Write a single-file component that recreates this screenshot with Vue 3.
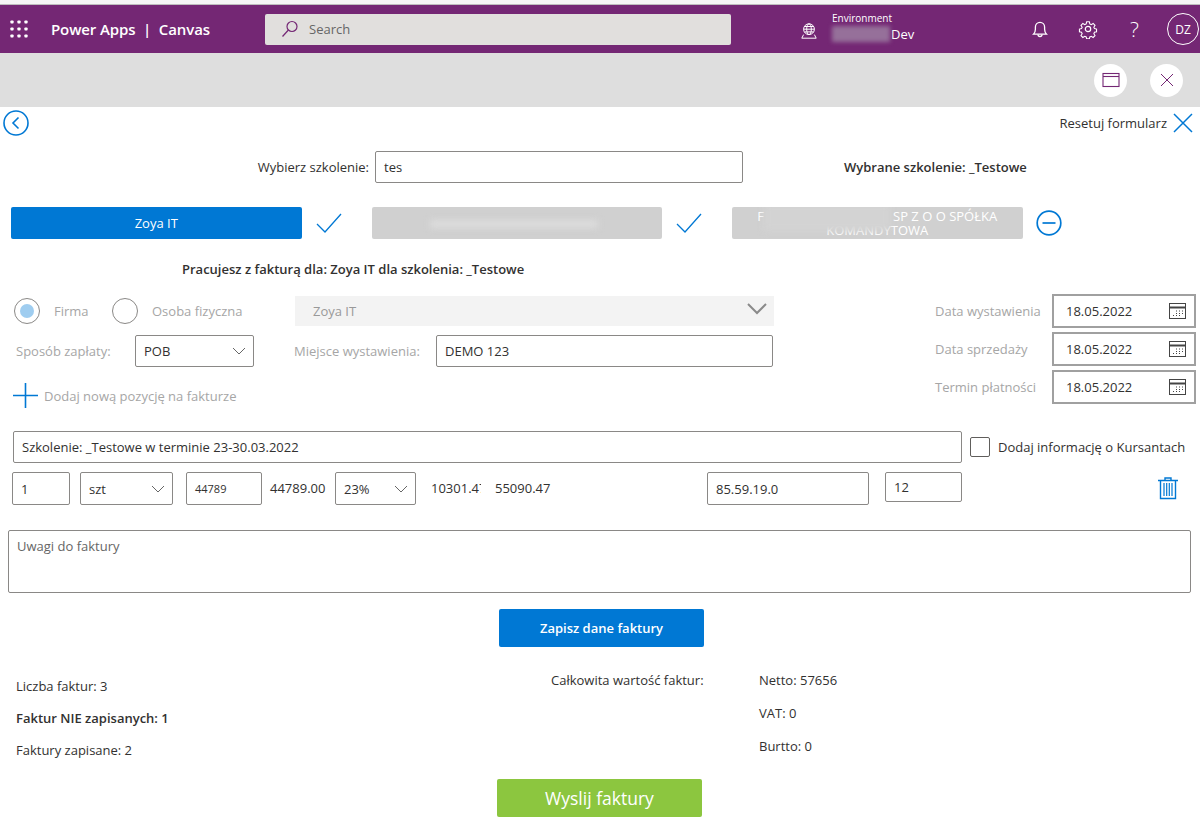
<template>
  <div class="page">
    <div class="top-strip"></div>

    <header class="app-bar">
      <svg class="waffle" width="18" height="18" viewBox="0 0 18 18" fill="#fff">
        <template v-for="y in [2, 9, 16]" :key="y">
          <rect v-for="x in [2, 9, 16]" :key="x" :x="x - 1.6" :y="y - 1.6" width="3.2" height="3.2" rx="0.8" />
        </template>
      </svg>
      <div class="app-name">Power Apps&nbsp; | &nbsp;Canvas</div>
      <div class="search">
        <svg width="18" height="18" viewBox="0 0 18 18" fill="none" stroke="#742774" stroke-width="1.2">
          <circle cx="11" cy="6.5" r="5" />
          <path d="M7.4 10 1.5 16.5" />
        </svg>
        <span>Search</span>
      </div>
      <svg class="env-icon" width="18" height="18" viewBox="0 0 20 20" fill="none" stroke="#fff" stroke-width="1.1">
        <circle cx="10" cy="8" r="6" />
        <ellipse cx="10" cy="8" rx="2.6" ry="6" />
        <path d="M4 8h12M5 5h10M5 11h10M4 14l-2 4h16l-2-4" />
      </svg>
      <div class="env">
        <div class="env-label">Environment</div>
        <div class="env-name"><span class="env-blur"></span>Dev</div>
      </div>
      <svg class="bell" width="20" height="20" viewBox="0 0 20 20" fill="none" stroke="#fff" stroke-width="1.3">
        <path d="M3.5 15.2h13c-1.3-1.4-1.9-2.6-1.9-5V8a4.6 4.6 0 0 0-9.2 0v2.2c0 2.4-.6 3.6-1.9 5Z" />
        <path d="M8 15.5a2 2 0 0 0 4 0" />
      </svg>
      <svg class="gear" width="20" height="20" viewBox="0 0 20 20" fill="none" stroke="#fff" stroke-width="1.2">
        <circle cx="10" cy="10" r="2.7" />
        <path d="M8.5 2h3l.5 2.4 1.6.7 2.1-1.3 2.1 2.1-1.3 2.1.7 1.6 2.3.5v3l-2.3.5-.7 1.6 1.3 2.1-2.1 2.1-2.1-1.3-1.6.7-.5 2.2h-3l-.5-2.2-1.6-.7-2.1 1.3-2.1-2.1 1.3-2.1-.7-1.6-2.3-.5v-3l2.3-.5.7-1.6-1.3-2.1 2.1-2.1 2.1 1.3 1.6-.7Z" transform="translate(1 1) scale(.9)" />
      </svg>
      <div class="help">?</div>
      <div class="avatar">DZ</div>
    </header>

    <div class="sub-bar">
      <button class="round-btn">
        <svg width="18" height="16" viewBox="0 0 18 16" fill="none" stroke="#742774" stroke-width="1.1">
          <rect x="1" y="1.5" width="16" height="13" />
          <path d="M1 4.5h16" />
        </svg>
      </button>
      <button class="round-btn">
        <svg width="14" height="14" viewBox="0 0 14 14" fill="none" stroke="#742774" stroke-width="1">
          <path d="m1 1 12 12M13 1 1 13" />
        </svg>
      </button>
    </div>

    <main class="form">
      <div class="nav-row">
        <svg width="26" height="26" viewBox="0 0 26 26" fill="none" stroke="#0078d4" stroke-width="1.6">
          <circle cx="13" cy="13" r="12" />
          <path d="M15.5 7.5 10 13l5.5 5.5" />
        </svg>
        <div class="reset">
          <span>Resetuj formularz</span>
          <svg width="20" height="20" viewBox="0 0 20 20" fill="none" stroke="#0078d4" stroke-width="1.5">
            <path d="m1 1 18 18M19 1 1 19" />
          </svg>
        </div>
      </div>

      <div class="course-row">
        <label class="course-label">Wybierz szkolenie:</label>
        <div class="field course-input">tes</div>
        <div class="course-picked">Wybrane szkolenie: _Testowe</div>
      </div>

      <div class="company-row">
        <template v-for="c in companies" :key="c.id">
          <div class="company" :class="{ active: c.active }">
            <span v-if="c.active">{{ c.name }}</span>
            <span v-else-if="c.long" class="company-long">F<span class="spacer"></span>SP Z O O SPÓŁKA<br>KOMANDYTOWA</span>
            <span v-if="c.blur" class="company-blur" :class="c.blur"></span>
          </div>
          <svg v-if="c.mark === 'check'" class="mark" width="26" height="20" viewBox="0 0 26 20" fill="none" stroke="#0078d4" stroke-width="1.3">
            <path d="m1 11 8 8L25 1" />
          </svg>
          <svg v-else class="mark minus" width="26" height="26" viewBox="0 0 26 26" fill="none" stroke="#0078d4" stroke-width="1.7">
            <circle cx="13" cy="13" r="11.8" />
            <path d="M6.5 13h13" />
          </svg>
        </template>
      </div>

      <div class="working">Pracujesz z fakturą dla: Zoya IT dla szkolenia: _Testowe</div>

      <div class="details">
        <div class="details-left">
          <div class="type-row">
            <span class="radio on"></span>
            <span class="muted firma">Firma</span>
            <span class="radio"></span>
            <span class="muted osoba">Osoba fizyczna</span>
            <div class="company-select">
              <span>Zoya IT</span>
              <svg width="20" height="12" viewBox="0 0 20 12" fill="none" stroke="#8a8a8a" stroke-width="2">
                <path d="m1 1 9 9 9-9" />
              </svg>
            </div>
          </div>
          <div class="pay-row">
            <span class="muted pay-label">Sposób zapłaty:</span>
            <div class="field select pay-select">
              <span>POB</span>
              <svg width="14" height="8" viewBox="0 0 14 8" fill="none" stroke="#666" stroke-width="1">
                <path d="m1 1 6 6 6-6" />
              </svg>
            </div>
            <span class="muted place-label">Miejsce wystawienia:</span>
            <div class="field place-input">DEMO 123</div>
          </div>
          <div class="add-row">
            <svg width="25" height="25" viewBox="0 0 25 25" fill="none" stroke="#0078d4" stroke-width="1.6">
              <path d="M12.5 0v25M0 12.5h25" />
            </svg>
            <span class="muted">Dodaj nową pozycję na fakturze</span>
          </div>
        </div>
        <div class="dates">
          <div v-for="d in dates" :key="d" class="date-row">
            <span class="muted date-label">{{ d }}</span>
            <div class="date-field">
              <span>18.05.2022</span>
              <svg width="17" height="16" viewBox="0 0 17 16" fill="none" stroke="#444" stroke-width="1">
                <rect x="0.5" y="0.5" width="16" height="15" />
                <path d="M.5 4.5h16" stroke-width="2" />
                <path d="M7 8h1M10 8h1M13 8h1M7 10.5h1M10 10.5h1M13 10.5h1M4 12.5h1M7 12.5h1M10 12.5h1" />
              </svg>
            </div>
          </div>
        </div>
      </div>

      <div class="desc-row">
        <div class="field desc-input">Szkolenie: _Testowe w terminie 23-30.03.2022</div>
        <span class="checkbox"></span>
        <span class="check-label">Dodaj informację o Kursantach</span>
      </div>

      <div class="line-row">
        <div class="field qty">1</div>
        <div class="field select unit">
          <span>szt</span>
          <svg width="14" height="8" viewBox="0 0 14 8" fill="none" stroke="#666" stroke-width="1">
            <path d="m1 1 6 6 6-6" />
          </svg>
        </div>
        <div class="field price">44789</div>
        <span class="net">44789.00</span>
        <div class="field select vat">
          <span>23%</span>
          <svg width="14" height="8" viewBox="0 0 14 8" fill="none" stroke="#666" stroke-width="1">
            <path d="m1 1 6 6 6-6" />
          </svg>
        </div>
        <span class="vat-sum">10301.47</span>
        <span class="gross">55090.47</span>
        <div class="field pkwiu">85.59.19.0</div>
        <div class="field code">12</div>
        <svg class="trash" width="20" height="23" viewBox="0 0 20 23" fill="none" stroke="#0078d4" stroke-width="1.4">
          <path d="M0 3.5h20M7 3V1h6v2" />
          <path d="M2.5 4v17.5h15V4" />
          <path d="M6 6v13M8.7 6v13M11.3 6v13M14 6v13" stroke-width="1.2" />
        </svg>
      </div>

      <div class="notes">Uwagi do faktury</div>

      <div class="center-row save-row">
        <button class="btn-save">Zapisz dane faktury</button>
      </div>

      <div class="summary">
        <div class="summary-left">
          <div>Liczba faktur: 3</div>
          <div class="strong">Faktur NIE zapisanych: 1</div>
          <div>Faktury zapisane: 2</div>
        </div>
        <div class="summary-title">Całkowita wartość faktur:</div>
        <div class="summary-right">
          <div>Netto: 57656</div>
          <div>VAT: 0</div>
          <div>Burtto: 0</div>
        </div>
      </div>

      <div class="center-row send-row">
        <button class="btn-send">Wyslij faktury</button>
      </div>
    </main>
  </div>
</template>

<script setup>
const companies = [
  { id: 1, name: 'Zoya IT', active: true, mark: 'check' },
  { id: 2, blur: 'blur-mid', mark: 'check' },
  { id: 3, long: true, blur: 'blur-left', mark: 'minus' }
]

const dates = ['Data wystawienia', 'Data sprzedaży', 'Termin płatności']
</script>

<style>
body {
  background: #fff;
}
</style>

<style scoped>
.page {
  width: 1200px;
  height: 823px;
  overflow: hidden;
  background: #fff;
  color: #323130;
  font-family: "Open Sans", "Noto Sans", sans-serif;
  font-size: 13px;
}

.top-strip {
  height: 5px;
  background: #f5f5f5;
  border-bottom: 1px solid #bdbdbd;
  box-sizing: border-box;
}

.app-bar {
  height: 48px;
  background: #742774;
  color: #fff;
  display: flex;
  align-items: center;
}

.waffle {
  margin-left: 10px;
}

.app-name {
  margin-left: 23px;
  width: 214px;
  font-size: 15px;
  font-weight: 600;
  letter-spacing: -0.1px;
}

.search {
  width: 466px;
  height: 31px;
  background: #e1dfdd;
  border-radius: 2px;
  display: flex;
  align-items: center;
  gap: 10px;
  padding-left: 16px;
  box-sizing: border-box;
  color: #666;
}

.env-icon {
  margin: 3px 0 0 69px;
}

.env {
  margin-left: 14px;
  width: 198px;
}

.env-label {
  font-size: 10px;
  line-height: 14px;
  margin-top: -5px;
}

.env-name {
  display: flex;
  align-items: center;
  font-size: 13px;
  line-height: 18px;
}

.env-blur {
  width: 58px;
  height: 16px;
  margin-right: 1px;
  background: #96709a;
  filter: blur(2px);
}

.gear {
  margin-left: 28px;
}

.help {
  margin-left: 32px;
  width: 16px;
  font-size: 21px;
  font-weight: 300;
}

.avatar {
  box-sizing: border-box;
  margin-left: 21px;
  width: 32px;
  height: 32px;
  border: 1px solid #fff;
  border-radius: 50%;
  display: flex;
  align-items: center;
  justify-content: center;
  font-size: 12px;
}

.sub-bar {
  height: 54px;
  background: #dedede;
  display: flex;
  justify-content: flex-end;
  align-items: center;
  gap: 23px;
  padding-right: 17px;
}

.round-btn {
  width: 33px;
  height: 33px;
  border: none;
  padding: 0;
  border-radius: 50%;
  background: #fff;
  display: flex;
  align-items: center;
  justify-content: center;
}

.form {
  display: flex;
  flex-direction: column;
}

.muted {
  color: #a6a6a6;
}

.field {
  box-sizing: border-box;
  background: #fff;
  border: 1px solid #8a8886;
  border-radius: 2px;
  display: flex;
  align-items: center;
  padding-left: 8px;
}

.select {
  justify-content: space-between;
  padding-right: 7px;
}

.nav-row {
  height: 44px;
  padding: 3px 7px 0 3px;
  box-sizing: border-box;
  display: flex;
  justify-content: space-between;
  align-items: flex-start;
}

.reset {
  display: flex;
  align-items: center;
  gap: 6px;
  margin-top: 3px;
}

.course-row {
  height: 32px;
  display: flex;
  align-items: center;
}

.course-label {
  width: 369px;
  text-align: right;
}

.course-input {
  margin-left: 6px;
  width: 368px;
  height: 32px;
}

.course-picked {
  margin-left: 101px;
  font-weight: 600;
}

.company-row {
  margin-top: 24px;
  padding-left: 11px;
  height: 32px;
  display: flex;
  align-items: center;
}

.company {
  position: relative;
  overflow: hidden;
  width: 290.5px;
  height: 32px;
  background: #d0d0d0;
  border-radius: 2px;
  color: #fff;
  display: flex;
  align-items: center;
  justify-content: center;
  text-align: center;
  line-height: 14px;
}

.company.active {
  background: #0078d4;
}

.company-long {
  display: block;
  width: 290px;
}

.spacer {
  display: inline-block;
  width: 129px;
}

.company-blur {
  position: absolute;
  filter: blur(3px);
}

.blur-mid {
  left: 58px;
  top: 13px;
  width: 168px;
  height: 8px;
  background: #dcdcdc;
}

.blur-left {
  left: 32px;
  top: -4px;
  width: 126px;
  height: 28px;
  background: #d3d3d3;
}

.mark {
  margin: 0 30px 0 14px;
}

.mark.minus {
  margin: 0 0 0 13px;
}

.working {
  margin-top: 21px;
  padding-left: 182px;
  height: 18px;
  line-height: 18px;
  font-weight: 600;
}

.details {
  margin-top: 16px;
  height: 116px;
  display: flex;
  justify-content: space-between;
  padding-right: 4px;
}

.details-left {
  display: flex;
  flex-direction: column;
}

.type-row {
  height: 30px;
  margin-top: 2px;
  padding-left: 14px;
  display: flex;
  align-items: center;
}

.radio {
  box-sizing: border-box;
  width: 26px;
  height: 26px;
  border: 1.5px solid #8a8886;
  border-radius: 50%;
  display: flex;
  align-items: center;
  justify-content: center;
}

.radio.on::after {
  content: "";
  width: 14px;
  height: 14px;
  border-radius: 50%;
  background: #9fcdf0;
}

.firma {
  margin-left: 14px;
  width: 58px;
}

.osoba {
  margin-left: 14px;
  width: 143px;
}

.company-select {
  width: 479px;
  height: 30px;
  background: #f3f3f3;
  color: #999;
  box-sizing: border-box;
  padding: 0 7px 0 18px;
  display: flex;
  align-items: center;
  justify-content: space-between;
}

.company-select svg {
  margin-top: -4px;
}

.pay-row {
  margin-top: 9px;
  height: 32px;
  padding-left: 16px;
  display: flex;
  align-items: center;
}

.pay-label {
  width: 119px;
}

.pay-select {
  width: 119px;
  height: 32px;
}

.place-label {
  margin-left: 40px;
  width: 142px;
}

.place-input {
  width: 337px;
  height: 32px;
}

.add-row {
  margin-top: 16px;
  padding-left: 13px;
  display: flex;
  align-items: center;
  gap: 6px;
}

.dates {
  display: flex;
  flex-direction: column;
  gap: 4px;
}

.date-row {
  display: flex;
  align-items: center;
}

.date-label {
  width: 117px;
}

.date-field {
  box-sizing: border-box;
  width: 144px;
  height: 34px;
  border: 2px solid #a0a0a0;
  padding: 0 8px 0 12px;
  display: flex;
  align-items: center;
  justify-content: space-between;
}

.desc-row {
  margin-top: 21px;
  padding-left: 13px;
  display: flex;
  align-items: center;
}

.desc-input {
  width: 949px;
  height: 32px;
}

.checkbox {
  box-sizing: border-box;
  margin-left: 8px;
  width: 20px;
  height: 20px;
  border: 1px solid #605e5c;
  border-radius: 2px;
}

.check-label {
  margin-left: 8px;
}

.line-row {
  margin-top: 9px;
  padding-left: 12px;
  height: 33px;
  display: flex;
  align-items: flex-start;
}

.qty {
  width: 58px;
  height: 33px;
}

.unit {
  margin-left: 10px;
  width: 93px;
  height: 33px;
}

.price {
  margin-left: 13px;
  width: 76px;
  height: 33px;
  font-size: 11px;
}

.net,
.vat-sum,
.gross {
  line-height: 33px;
}

.net {
  margin-left: 8px;
  width: 65px;
}

.vat {
  width: 81px;
  height: 33px;
}

.vat-sum {
  margin-left: 15px;
  width: 50px;
  overflow: hidden;
  white-space: nowrap;
}

.gross {
  margin-left: 14px;
  width: 212px;
}

.pkwiu {
  width: 162px;
  height: 33px;
}

.code {
  margin-left: 16px;
  width: 77px;
  height: 30px;
}

.trash {
  margin: 5px 0 0 196px;
}

.notes {
  box-sizing: border-box;
  margin: 25px 0 0 8px;
  width: 1183px;
  height: 63px;
  border: 1px solid #8a8886;
  border-radius: 2px;
  padding: 6px 8px;
  color: #666;
}

.center-row {
  display: flex;
  justify-content: center;
}

.save-row {
  margin-top: 16px;
  padding-left: 3px;
}

.btn-save {
  width: 205px;
  height: 38px;
  border: none;
  border-radius: 2px;
  background: #0078d4;
  color: #fff;
  font-family: inherit;
  font-size: 13px;
  font-weight: 600;
}

.summary {
  margin-top: 24px;
  height: 108px;
  display: flex;
  align-items: flex-start;
}

.summary-left {
  margin-left: 16px;
  margin-top: 6px;
  width: 535px;
  display: flex;
  flex-direction: column;
  gap: 14px;
  line-height: 18px;
}

.strong {
  font-weight: 600;
}

.summary-title {
  width: 208px;
  line-height: 18px;
}

.summary-right {
  display: flex;
  flex-direction: column;
  gap: 15px;
  line-height: 18px;
}

.send-row {
  padding-right: 1px;
}

.btn-send {
  width: 205px;
  height: 38px;
  border: none;
  border-radius: 2px;
  background: #8cc63f;
  color: #fff;
  font-family: inherit;
  font-size: 17.5px;
}
</style>
